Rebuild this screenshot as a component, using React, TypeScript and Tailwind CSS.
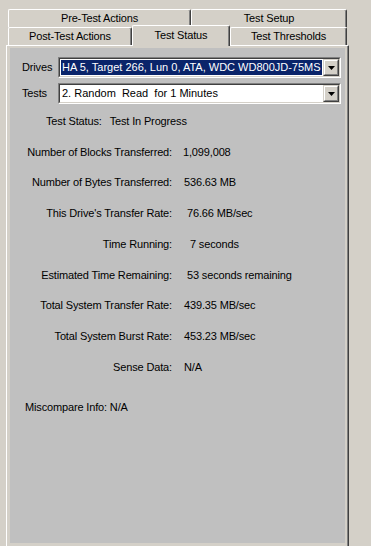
import React from "react";

const FONT = { fontFamily: '"Liberation Sans", Arial, sans-serif' };

function Tab({
  label,
  width,
  selected = false,
}: {
  label: string;
  width: string;
  selected?: boolean;
}) {
  if (selected) {
    return (
      <div
        className={`${width} h-[21px] -mt-[2px] -mb-[1px] relative z-10 bg-[#d4d0c8] border-l border-t border-l-white border-t-white border-r border-r-[#404040] shadow-[inset_-1px_0_0_#808080] rounded-tl-[2px] rounded-tr-[2px] flex items-start justify-center pt-[3px] text-[11px] leading-[13px] tracking-[-0.15px] text-black`}
      >
        {label}
      </div>
    );
  }
  return (
    <div
      className={`${width} h-[18px] bg-[#d4d0c8] border-l border-t border-l-white border-t-white border-r border-r-[#404040] shadow-[inset_-1px_0_0_#808080] rounded-tl-[2px] rounded-tr-[2px] flex items-center justify-center text-[11px] leading-[13px] tracking-[-0.15px] text-black`}
    >
      {label}
    </div>
  );
}

function DropButton() {
  return (
    <div className="w-[16px] h-full bg-[#d4d0c8] border border-t-[#d4d0c8] border-l-[#d4d0c8] border-b-[#404040] border-r-[#404040]">
      <div className="h-full w-full border border-t-white border-l-white border-b-[#808080] border-r-[#808080] flex items-center justify-center">
        <svg width="7" height="4" viewBox="0 0 7 4">
          <polygon points="0,0 7,0 3.5,4" fill="#000" />
        </svg>
      </div>
    </div>
  );
}

function Combo({ text, selected }: { text: string; selected?: boolean }) {
  return (
    <div className="w-[283px] h-[21px] border border-t-[#808080] border-l-[#808080] border-b-white border-r-white">
      <div className="h-full border border-t-[#404040] border-l-[#404040] border-b-[#d4d0c8] border-r-[#d4d0c8] bg-white flex items-stretch pl-[1px]">
        <div
          className={`flex-1 my-[1px] flex items-center pl-[1px] text-[11px] leading-[13px] tracking-normal whitespace-pre overflow-hidden ${
            selected ? "bg-[#0a246a] text-white" : "bg-white text-black"
          }`}
        >
          {text}
        </div>
        <div className="ml-[1px]">
          <DropButton />
        </div>
      </div>
    </div>
  );
}

const rows: { label: string; value: string; pad: string }[] = [
  { label: "Number of Blocks Transferred:", value: "1,099,008", pad: "pl-[11px]" },
  { label: "Number of Bytes Transferred:", value: "536.63 MB", pad: "pl-[12px]" },
  { label: "This Drive's Transfer Rate:", value: "76.66 MB/sec", pad: "pl-[15px]" },
  { label: "Time Running:", value: "7 seconds", pad: "pl-[18px]" },
  { label: "Estimated Time Remaining:", value: "53 seconds remaining", pad: "pl-[15px]" },
  { label: "Total System Transfer Rate:", value: "439.35 MB/sec", pad: "pl-[12px]" },
  { label: "Total System Burst Rate:", value: "453.23 MB/sec", pad: "pl-[12px]" },
  { label: "Sense Data:", value: "N/A", pad: "pl-[12px]" },
];

export default function App() {
  return (
    <div
      className="w-[371px] h-[546px] bg-[#d4d0c8] flex flex-col overflow-hidden text-black"
      style={FONT}
    >
      {/* Tabs */}
      <div className="pt-[9px] pl-[8px] flex flex-col">
        <div className="flex">
          <Tab label="Pre-Test Actions" width="w-[183px]" />
          <Tab label="Test Setup" width="w-[156px]" />
        </div>
        <div className="flex items-start">
          <Tab label="Post-Test Actions" width="w-[124px]" />
          <Tab label="Test Status" width="w-[98px]" selected />
          <Tab label="Test Thresholds" width="w-[117px]" />
        </div>
      </div>

      {/* Panel */}
      <div className="ml-[6px] w-[343px] flex-1 flex flex-col bg-[#d4d0c8] border-l border-t border-l-white border-t-white border-r border-r-[#404040] shadow-[inset_-1px_0_0_#808080] pt-[2px] pl-[3px] pr-[3px] pb-[3px]">
        <div className="flex-1 bg-[#c0c0c0] flex flex-col pt-[9px] text-[11px] leading-[13px] tracking-[-0.15px]">
          <div className="flex items-center">
            <div className="w-[48px] pl-[12px]">Drives</div>
            <Combo text="HA 5, Target 266, Lun 0, ATA, WDC WD800JD-75MS" selected />
          </div>
          <div className="flex items-center mt-[5px]">
            <div className="w-[48px] pl-[12px]">Tests</div>
            <Combo text="2. Random  Read  for 1 Minutes" />
          </div>

          <div className="flex items-center h-[30.75px] mt-[2px]">
            <div className="pl-[36px]">Test Status:</div>
            <div className="pl-[8px]">Test In Progress</div>
          </div>

          {rows.map((r) => (
            <div key={r.label} className="flex items-center h-[30.75px]">
              <div className="w-[162px] text-right whitespace-nowrap">{r.label}</div>
              <div className={`${r.pad} whitespace-nowrap`}>{r.value}</div>
            </div>
          ))}

          <div className="flex items-center h-[30.75px] mt-[9px] pl-[15px]">
            Miscompare Info: N/A
          </div>
        </div>
      </div>
    </div>
  );
}
